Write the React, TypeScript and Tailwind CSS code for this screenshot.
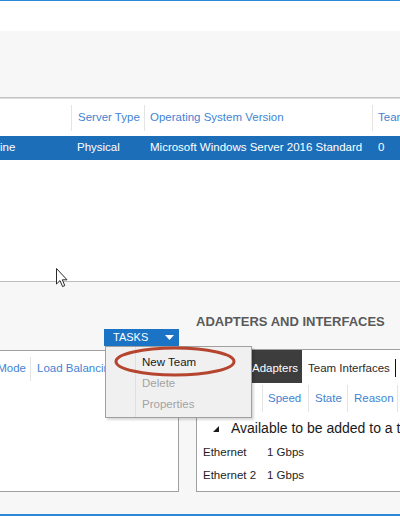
import React from "react";

export default function App() {
  return (
    <div className="relative w-[400px] h-[516px] overflow-hidden bg-[#f7f7f7] font-['Liberation_Sans',Arial,sans-serif] text-[11.5px] text-[#1e1e1e] flex flex-col">
      <div className="h-px bg-[#2b88d8] shrink-0" />
      <div className="h-[30px] bg-white shrink-0" />
      <div className="h-[66px] bg-[#f7f7f7] shrink-0" />
      <div className="h-px bg-[#c4c4c4] shrink-0" />
      <div className="h-px bg-[#dedede] shrink-0" />

      {/* servers table */}
      <div className="h-[182px] bg-white shrink-0 flex flex-col">
        <div className="mt-[6px] h-[26px] flex text-[#3f84d4] whitespace-nowrap">
          <div className="w-[71px] shrink-0" />
          <div className="w-[73px] shrink-0 border-l border-[#e4e4e4] pl-[6px] flex items-center">Server Type</div>
          <div className="w-[228px] shrink-0 border-l border-[#e4e4e4] pl-[5px] flex items-center">Operating System Version</div>
          <div className="shrink-0 border-l border-[#e4e4e4] pl-[5px] flex items-center">Teams</div>
        </div>
        <div className="mt-[5px] h-[24px] flex bg-[#1c6eb9] text-white whitespace-nowrap">
          <div className="w-[71px] shrink-0 flex items-center">ine</div>
          <div className="w-[73px] shrink-0 pl-[6px] flex items-center">Physical</div>
          <div className="w-[228px] shrink-0 pl-[6px] flex items-center">Microsoft Windows Server 2016 Standard</div>
          <div className="shrink-0 pl-[6px] flex items-center">0</div>
        </div>
      </div>
      <div className="h-px bg-[#bdbdbd] shrink-0" />

      {/* bottom section */}
      <div className="flex-1 flex">
        {/* teams column */}
        <div className="w-[179px] shrink-0 flex flex-col pt-[47px]">
          <div className="self-end w-[75px] h-[17px] bg-[#1a73c4] text-white text-[11px] flex items-center pl-[9px]">
            <span>TASKS</span>
            <svg className="ml-[17px]" width="9" height="5" viewBox="0 0 9 5">
              <polygon points="0,0 9,0 4.5,5" fill="#ffffff" />
            </svg>
          </div>
          <div className="mt-[4px] h-[142px] bg-white border-t border-r border-b border-[#a0a0a0] flex flex-col">
            <div className="mt-[6px] h-[24px] flex text-[#3f84d4] whitespace-nowrap">
              <div className="w-[30px] shrink-0 overflow-hidden flex justify-end items-center pr-[4px]">
                <span className="shrink-0">Teaming Mode</span>
              </div>
              <div className="flex-1 border-l border-[#e4e4e4] pl-[6px] flex items-center overflow-hidden">Load Balancing</div>
            </div>
          </div>
        </div>

        {/* adapters column */}
        <div className="ml-[17px] flex-1 flex flex-col pt-[32px] min-w-0">
          <div className="h-[16px] leading-[16px] text-[13px] font-bold text-[#5a5a5a] whitespace-nowrap">
            ADAPTERS AND INTERFACES
          </div>
          <div className="mt-[19px] h-[143px] w-[220px] bg-white border-t border-l border-b border-[#a0a0a0] flex flex-col">
            <div className="h-[33px] flex whitespace-nowrap">
              <div className="w-[105px] shrink-0 bg-[#3d3d3d] text-white flex items-center justify-end pr-[4px] pt-[5px]">
                Network Adapters
              </div>
              <div className="pl-[6px] flex items-center pt-[5px] text-[#2a2a2a]">Team Interfaces</div>
              <div className="ml-[5px] self-center mt-[3px] w-px h-[18px] bg-[#111111]" />
            </div>
            <div className="mt-[2px] h-[27px] flex text-[#3f84d4] whitespace-nowrap">
              <div className="w-[65px] shrink-0 pl-[6px] flex items-center">Adapter</div>
              <div className="w-[46px] shrink-0 border-l border-[#e4e4e4] pl-[5px] flex items-center">Speed</div>
              <div className="w-[39px] shrink-0 border-l border-[#e4e4e4] pl-[6px] flex items-center">State</div>
              <div className="w-[50px] shrink-0 border-l border-[#e4e4e4] pl-[6px] flex items-center">Reason</div>
              <div className="flex-1 border-l border-[#e4e4e4]" />
            </div>
            <div className="mt-[5px] h-[23px] flex items-center pl-[16px] whitespace-nowrap">
              <svg width="6" height="6" viewBox="0 0 6 6" className="shrink-0">
                <polygon points="6,0 6,6 0,6" fill="#1a1a1a" />
              </svg>
              <span className="ml-[12px] text-[14px] text-[#1a1a1a]">Available to be added to a team</span>
            </div>
            <div className="mt-[1px] h-[23px] flex items-center pl-[6px] whitespace-nowrap">
              <span className="w-[64px]">Ethernet</span>
              <span>1 Gbps</span>
            </div>
            <div className="h-[24px] flex items-center pl-[6px] whitespace-nowrap">
              <span className="w-[64px]">Ethernet 2</span>
              <span>1 Gbps</span>
            </div>
          </div>
        </div>
      </div>
      <div className="h-[2px] bg-[#2b88d8] shrink-0" />

      {/* tasks dropdown */}
      <div className="absolute left-[105px] top-[346px] w-[147px] h-[72px] bg-[#f0f0f0] border border-[#a0a0a0] shadow-[2px_2px_2px_rgba(0,0,0,0.15)] flex">
        <div className="w-[30px] border-r border-[#e0e0e0]" />
        <div className="flex-1 pl-[6px] pt-[5px] flex flex-col whitespace-nowrap">
          <div className="h-[21px] leading-[21px] text-[#1a1a1a]">New Team</div>
          <div className="h-[21px] leading-[21px] text-[#a3a3a3]">Delete</div>
          <div className="h-[21px] leading-[21px] text-[#a3a3a3]">Properties</div>
        </div>
      </div>

      {/* red highlight ellipse */}
      <svg className="absolute left-[113px] top-[345px]" width="124" height="33" viewBox="0 0 124 33">
        <ellipse cx="62" cy="16.5" rx="59" ry="13.5" fill="none" stroke="#b5452f" strokeWidth="3" />
      </svg>

      {/* mouse cursor */}
      <svg className="absolute left-[56px] top-[268px]" width="13" height="20" viewBox="0 0 13 20">
        <path d="M0.5 0.5 L0.5 16 L4 12.6 L6.6 18.6 L8.8 17.6 L6.3 11.8 L11 11.8 Z" fill="#ffffff" stroke="#2a2a2a" strokeWidth="1" strokeLinejoin="round" />
      </svg>
    </div>
  );
}
